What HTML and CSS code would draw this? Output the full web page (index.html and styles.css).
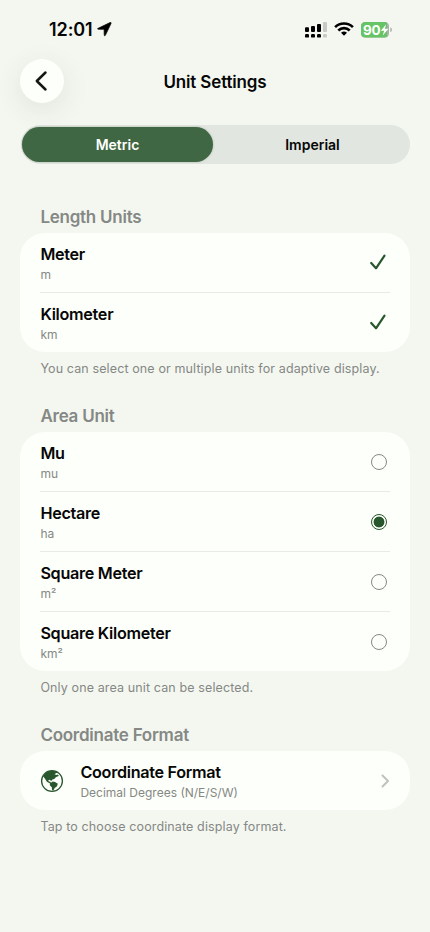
FILE: index.html
```html
<!DOCTYPE html>
<html lang="en">
<head>
<meta charset="utf-8">
<meta name="viewport" content="width=device-width, initial-scale=1">
<title>Unit Settings</title>
<link rel="stylesheet" href="styles.css">
</head>
<body>
<div class="screen">
  <div class="status">
    <div class="clock"><span>12:01</span>
      <svg width="15" height="15" viewBox="0 0 15 15"><path d="M1.1 6.3 L13 .6 Q14.6 0 14 1.6 L8.4 13.3 Q7.6 14.6 7.2 13.1 L7.1 8 Q7.1 7.3 6.4 7.3 L1.3 7.3 Q-.2 7 1.1 6.3Z" stroke="#080a08" stroke-width=".7"/></svg>
    </div>
    <div class="indicators">
      <svg width="22" height="16" viewBox="0 0 22 16">
        <g><rect x="0" y="5.2" width="4" height="4.8" rx="1"/><rect x="6" y="4" width="4" height="6" rx="1"/><rect x="12" y="2" width="4" height="8" rx="1"/><rect x="0" y="12" width="4" height="3.6" rx="1.2"/><rect x="6" y="12" width="4" height="3.6" rx="1.2"/><rect x="12" y="12" width="4" height="3.6" rx="1.2"/></g>
        <g fill="#c8cac5"><rect x="18" y="0" width="4" height="10" rx="1"/><rect x="18" y="12" width="4" height="3.6" rx="1.2"/></g>
      </svg>
      <svg class="wifi" width="20" height="14" viewBox="0 0 20 14" fill="none" stroke="#000" stroke-width="2.6"><path d="M1.1 5.1 A12.7 12.7 0 0 1 18.9 5.1"/><path d="M4.3 8.5 A8.1 8.1 0 0 1 15.7 8.5"/><path d="M10 13.8 L7 10.8 Q10 8.3 13 10.8Z" fill="#000" stroke="none"/></svg>
      <div class="battery">
        <svg width="32" height="16" viewBox="0 0 32 16"><path d="M4.5 0H23.5Q28 0 28 4.5V11Q28 15.5 23.5 15.5H4.5Q0 15.5 0 11V4.5Q0 0 4.5 0Z" fill="#adb0aa"/><path d="M4.5 0H23.5Q25 0 26 .8V14.7Q25 15.5 23.5 15.5H4.5Q0 15.5 0 11V4.5Q0 0 4.5 0Z" fill="#65c466"/><path d="M29.3 5.3Q31 6 31 7.8T29.3 10.3Z" fill="#adb0aa"/><path d="M25.2 2.2L19.8 8.7H23.1L21.8 13.5L27.4 6.8H23.9Z" fill="#fff"/></svg>
        <span>90</span>
      </div>
    </div>
  </div>
  <header class="nav">
    <button class="back" aria-label="Back"><svg width="14" height="22" viewBox="0 0 14 22"><path d="M11.5 2.5L2.8 11L11.5 19.5"/></svg></button>
    <h1>Unit Settings</h1>
  </header>
  <div class="segments"><button class="segment selected">Metric</button><button class="segment">Imperial</button></div>
  <main>
    <section class="group">
      <h2>Length Units</h2>
      <div class="card">
        <div class="row"><div class="label"><b>Meter</b><small>m</small></div><svg class="check" width="18" height="18" viewBox="0 0 18 18"><path d="M2.2 10L7 15.3L15.5 2.6"/></svg></div>
        <div class="row"><div class="label"><b>Kilometer</b><small>km</small></div><svg class="check" width="18" height="18" viewBox="0 0 18 18"><path d="M2.2 10L7 15.3L15.5 2.6"/></svg></div>
      </div>
      <p>You can select one or multiple units for adaptive display.</p>
    </section>
    <section class="group">
      <h2>Area Unit</h2>
      <div class="card">
        <div class="row"><div class="label"><b>Mu</b><small>mu</small></div><i class="radio"></i></div>
        <div class="row"><div class="label"><b>Hectare</b><small>ha</small></div><i class="radio on"></i></div>
        <div class="row"><div class="label"><b>Square Meter</b><small>m²</small></div><i class="radio"></i></div>
        <div class="row"><div class="label"><b>Square Kilometer</b><small>km²</small></div><i class="radio"></i></div>
      </div>
      <p>Only one area unit can be selected.</p>
    </section>
    <section class="group">
      <h2>Coordinate Format</h2>
      <div class="card">
        <div class="row"><svg class="globe" width="24" height="24" viewBox="0 0 24 24"><circle cx="12" cy="12" r="10.4" fill="none" stroke="#28572d" stroke-width="1.3"/><path d="M3 7.5Q5.8 1.8 12 1.7Q15.7 1.6 18.2 4L16.2 3.9L14.5 5.3L16.5 6.1L18 5.5L18.8 7L16.1 8.1L14.2 10L12.4 10.5L11.3 12.1L9.6 10.7L8.3 11.3L8.8 12.6L10.3 12.7L11 13.8L12.7 12.5L15 13L17.8 14.7L17 17.2L14.7 19L13.3 21.5L12.1 21.2L11.8 18.2L9.8 16.3L10 14.5L6.9 12.7L4.5 9.1Z" fill="#28572d"/></svg><div class="label"><b>Coordinate Format</b><small>Decimal Degrees (N/E/S/W)</small></div><svg class="chevron" width="9" height="14" viewBox="0 0 9 14"><path d="M1.5 1.5L7 7L1.5 12.5"/></svg></div>
      </div>
      <p>Tap to choose coordinate display format.</p>
    </section>
  </main>
</div>
</body>
</html>
```
FILE: styles.css
```css
* { box-sizing: border-box; }
body { margin: 0; background: #f4f7f0; color: #060706; font-family: Inter, "Liberation Sans", sans-serif; }
.screen { width: 430px; height: 932px; overflow: hidden; }
button { border: 0; padding: 0; background: none; font: inherit; color: inherit; }
svg { display: block; flex: none; }
h1, h2, p { margin: 0; }
.status { height: 59px; padding: 0 37px 0 49px; display: flex; justify-content: space-between; align-items: center; }
.clock { display: flex; align-items: center; gap: 4px; font-size: 18px; font-weight: 600; letter-spacing: -.1px; }
.indicators { display: flex; align-items: center; gap: 7px; }
.wifi { margin-top: -1px; }
.battery { position: relative; width: 32px; height: 16px; }
.battery span { position: absolute; left: 2px; top: 0; font-size: 13.5px; line-height: 16px; font-weight: 700; letter-spacing: -.3px; color: #fff; }
.nav { height: 44px; padding: 0 20px; display: grid; grid-template-columns: 44px 1fr 44px; align-items: center; }
.back { width: 44px; height: 44px; border-radius: 50%; background: #fdfffa; display: grid; place-items: center; box-shadow: 0 7px 28px rgba(45, 55, 40, .1); }
.back svg { margin-left: -3px; fill: none; stroke: #151715; stroke-width: 2.5; stroke-linecap: round; stroke-linejoin: round; }
.nav h1 { padding-top: 2px; text-align: center; font-size: 17px; line-height: 22px; font-weight: 600; letter-spacing: -.15px; }
.segments { height: 39px; margin: 22px 20.5px 0; padding: 2px; border-radius: 20px; background: #e1e6e0; display: grid; grid-template-columns: 191px 1fr; }
.segment { font-size: 14px; font-weight: 600; border-radius: 18px; letter-spacing: 0; padding-left: 4px; }
.segment.selected { margin-left: -.5px; margin-right: .5px; padding-left: 0; background: #406743; color: #fff; box-shadow: 0 0 2px rgba(30, 60, 30, .35); }
main { padding: 38px 20.5px 0 20.4px; }
.group { height: 199px; }
.group:nth-child(2) { height: 319px; }
.group h2 { height: 31px; padding-left: 20px; font-size: 17px; line-height: 30px; font-weight: 600; letter-spacing: -.25px; color: #858885; }
.group p { padding: 6px 0 0 20px; font-size: 12.5px; line-height: 21px; letter-spacing: .12px; color: #858885; white-space: nowrap; }
.card { border-radius: 25px; background: #fdfffa; padding: 0 20px; }
.row { height: 60px; border-bottom: 1px solid #e8ebe5; display: flex; align-items: center; }
.row:last-child { height: 59px; border: 0; }
.label { flex: 1; padding-top: 2px; }
.label b { display: block; font-size: 16.2px; line-height: 21px; font-weight: 600; letter-spacing: -.3px; }
.label small { display: block; font-size: 12px; line-height: 19px; letter-spacing: 0; color: #858885; }
.check { margin: -1px 3px 0 0; fill: none; stroke: #28572d; stroke-width: 2.2; stroke-linecap: round; stroke-linejoin: round; }
.radio { width: 16px; height: 16px; margin-right: 2.5px; border: 1.4px solid #858885; border-radius: 50%; }
.radio.on { border-color: #28572d; background: radial-gradient(circle, #28572d 5px, transparent 5.8px); }
.globe { margin-right: 16px; }
.chevron { fill: none; stroke: #bfc2bd; stroke-width: 2; stroke-linecap: round; stroke-linejoin: round; }
```
